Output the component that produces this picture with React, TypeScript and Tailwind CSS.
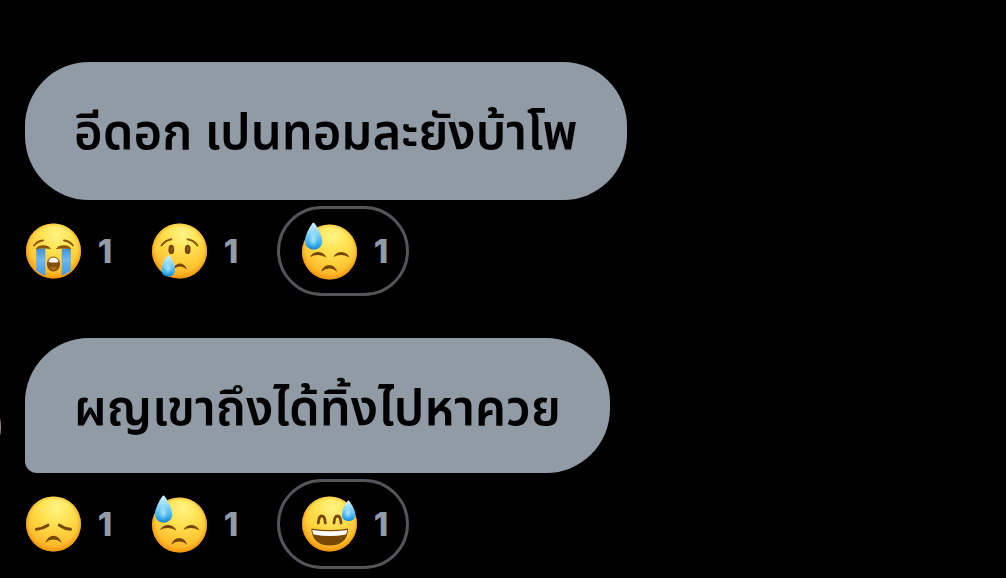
import { useId, useState } from "react";
import type { ReactNode } from "react";

type EmojiName = "sob" | "cry" | "sweat" | "disappointed" | "sweatSmile";

interface Reaction {
  emoji: EmojiName;
  count: number;
}

interface Message {
  id: number;
  text: string;
  last: boolean;
  reactions: Reaction[];
  selected: EmojiName;
}

const MESSAGES: Message[] = [
  {
    id: 1,
    text: "อีดอก เปนทอมละยังบ้าโพ",
    last: false,
    reactions: [
      { emoji: "sob", count: 1 },
      { emoji: "cry", count: 1 },
      { emoji: "sweat", count: 1 },
    ],
    selected: "sweat",
  },
  {
    id: 2,
    text: "ผญเขาถึงได้ทิ้งไปหาควย",
    last: true,
    reactions: [
      { emoji: "disappointed", count: 1 },
      { emoji: "sweat", count: 1 },
      { emoji: "sweatSmile", count: 1 },
    ],
    selected: "sweatSmile",
  },
];

const LABELS: Record<EmojiName, string> = {
  sob: "Loudly crying",
  cry: "Crying",
  sweat: "Downcast with sweat",
  disappointed: "Disappointed",
  sweatSmile: "Grinning with sweat",
};

const BROWN = "#744708";

function Face({ cy = 32, children }: { cy?: number; children: (id: string) => ReactNode }) {
  const id = useId();
  return (
    <svg width="58" height="64" viewBox="0 0 58 64" fill="none" aria-hidden="true" className="shrink-0">
      <defs>
        <radialGradient id={`${id}face`} cx="0.56" cy="0.2" r="0.82">
          <stop offset="0" stopColor="#fff485" />
          <stop offset="0.35" stopColor="#ffe252" />
          <stop offset="0.7" stopColor="#ffc836" />
          <stop offset="1" stopColor="#fba81e" />
        </radialGradient>
        <radialGradient id={`${id}edge`} cx="0.5" cy="0.48" r="0.53">
          <stop offset="0.8" stopColor="#f08c00" stopOpacity="0" />
          <stop offset="1" stopColor="#e88400" stopOpacity="0.65" />
        </radialGradient>
        <linearGradient id={`${id}drop`} x1="0" y1="0" x2="0" y2="1">
          <stop offset="0" stopColor="#d6f4ff" />
          <stop offset="0.4" stopColor="#86d6fa" />
          <stop offset="0.75" stopColor="#3fb2f0" />
          <stop offset="1" stopColor="#1388d4" />
        </linearGradient>
        <radialGradient id={`${id}shine`} cx="0.5" cy="0.5" r="0.5">
          <stop offset="0" stopColor="#d8f7ff" stopOpacity="0.7" />
          <stop offset="1" stopColor="#a5e6ff" stopOpacity="0" />
        </radialGradient>
        <linearGradient id={`${id}tear`} x1="0" y1="0" x2="0" y2="1">
          <stop offset="0" stopColor="#3f8fd6" />
          <stop offset="0.4" stopColor="#6bb9f3" />
          <stop offset="1" stopColor="#4298e2" />
        </linearGradient>
      </defs>
      <circle cx="28.5" cy={cy} r="27.5" fill={`url(#${id}face)`} />
      <circle cx="28.5" cy={cy} r="27.5" fill={`url(#${id}edge)`} />
      {children(id)}
    </svg>
  );
}

function Sob() {
  return (
    <Face>
      {(id) => (
        <>
          <path d="M9 26.5Q12.5 22 18 21.5M39 21.5Q44.5 22 48 26.5" stroke="#8a5508" strokeWidth="1.8" strokeLinecap="round" />
          <path d="M11.2 29.5H20.3V56.8Q15.5 54.8 11.2 51.5Z" fill={`url(#${id}tear)`} />
          <path d="M36.7 29.5H45.8V51.5Q41.5 54.8 36.7 56.8Z" fill={`url(#${id}tear)`} />
          <path d="M10.6 30.3Q12.5 26.3 18 26.2Q24.5 26.4 26 30.3Q22 29.3 18.5 29.6Q14 29.4 10.6 30.3ZM31 30.3Q32.5 26.4 39 26.2Q44.5 26.3 46.4 30.3Q42 29.4 38.5 29.6Q35 29.3 31 30.3Z" fill="#8a5508" />
          <ellipse cx="28.5" cy="45" rx="6.6" ry="7.4" fill="#80500c" />
          <path d="M23.5 43Q24 38.5 28.5 38.4Q33 38.5 33.5 43Q28.5 44.2 23.5 43Z" fill="#fff" />
          <path d="M24.5 49Q28.5 46.2 32.5 49Q28.5 53.2 24.5 49Z" fill="#a96b18" />
        </>
      )}
    </Face>
  );
}

function Cry() {
  return (
    <Face>
      {(id) => (
        <>
          <path d="M10.5 26.5Q14 21.5 20.3 20.2M36.7 20.2Q43 21.5 46.5 26.5" stroke="#8a5508" strokeWidth="2" strokeLinecap="round" />
          <ellipse cx="20.3" cy="30.4" rx="2.9" ry="4.7" fill={BROWN} />
          <ellipse cx="36.7" cy="30.4" rx="2.9" ry="4.7" fill={BROWN} />
          <path d="M20.8 28.5V31.5M36.9 28.5V31.5" stroke="#99651b" strokeWidth="1.2" strokeLinecap="round" />
          <path d="M23 48Q25.5 44.2 29.5 44.4Q34.5 45.2 36 50.5Q33 47.7 29.5 47.4Q26 47.3 23.5 49.5Z" fill={BROWN} />
          <path d="M17.6 36C18.8 36 24 44.5 24 50.8C24 55 21.2 57.6 17.3 57.6C13.3 57.6 10.4 55 10.4 50.8C10.4 44.5 16.4 36 17.6 36Z" fill={`url(#${id}drop)`} />
          <ellipse cx="17" cy="49" rx="4.5" ry="7" fill={`url(#${id}shine)`} />
        </>
      )}
    </Face>
  );
}

function Sweat() {
  return (
    <Face cy={33}>
      {(id) => (
        <>
          <path d="M9 38Q11.5 33.1 17.5 33Q23.5 33.6 25.2 38.5Q21.5 36.2 17 36Q12.5 35.9 9 38Z" fill={BROWN} />
          <path d="M32.4 38Q35 33.1 40.5 33Q46.5 33.6 48.4 38.5Q44.5 36.2 40.5 36Q36 35.9 32.4 38Z" fill={BROWN} />
          <path d="M20.1 52.8Q22.5 46.1 28.2 46Q34 46.1 36.2 52.8Q32.5 49.6 28.2 49.5Q24 49.6 20.1 52.8Z" fill={BROWN} />
          <path d="M12.5 3.5C13.8 3.5 21.2 15 21.2 22.2C21.2 27.4 17.5 30.5 12.7 30.5C7.8 30.5 4 27.4 4 22.2C4 15 11.2 3.5 12.5 3.5Z" fill={`url(#${id}drop)`} />
          <ellipse cx="12.3" cy="20.5" rx="5" ry="9" fill={`url(#${id}shine)`} />
        </>
      )}
    </Face>
  );
}

function Disappointed() {
  return (
    <Face>
      {() => (
        <>
          <path d="M11.5 37.3Q17.5 36.8 23 33.2" stroke={BROWN} strokeWidth="3" strokeLinecap="round" />
          <path d="M34.3 33.2Q39.5 36.8 45.5 37.3" stroke={BROWN} strokeWidth="3" strokeLinecap="round" />
          <path d="M20.3 50.8Q23 43.9 28.5 43.7Q34 43.9 36.7 50.8Q33 47.6 28.5 47.6Q24 47.6 20.3 50.8Z" fill={BROWN} />
        </>
      )}
    </Face>
  );
}

function SweatSmile() {
  return (
    <Face>
      {(id) => (
        <>
          <path d="M17.3 31Q17.8 24 20.8 24Q23.9 24 24.3 31M33 31Q33.5 24 36.5 24Q39.5 24 40 31" stroke={BROWN} strokeWidth="2.8" strokeLinecap="round" />
          <path d="M10.3 36.5Q28.5 39.5 47.2 36.5Q46.5 53.3 28.7 53.6Q11.3 53.3 10.3 36.5Z" fill="#7a4704" />
          <path d="M11.3 38Q28.5 40.7 46.2 38Q46 41.5 44.7 42.5Q28.7 45.7 13 42.5Q11.5 41.5 11.3 38Z" fill="#fff" />
          <path d="M47.3 8.5C48.5 8.5 54.4 17.5 54.4 23C54.4 26.7 51.5 29 47.6 29C43.7 29 40.8 26.7 40.8 23C40.8 17.5 46.2 8.5 47.3 8.5Z" fill={`url(#${id}drop)`} />
          <ellipse cx="47" cy="21" rx="4" ry="7" fill={`url(#${id}shine)`} />
        </>
      )}
    </Face>
  );
}

const EMOJIS: Record<EmojiName, () => ReactNode> = {
  sob: Sob,
  cry: Cry,
  sweat: Sweat,
  disappointed: Disappointed,
  sweatSmile: SweatSmile,
};

function ReactionButton({
  reaction,
  selected,
  onClick,
}: {
  reaction: Reaction;
  selected: boolean;
  onClick: () => void;
}) {
  const Emoji = EMOJIS[reaction.emoji];
  return (
    <button
      onClick={onClick}
      aria-label={`${LABELS[reaction.emoji]} ${reaction.count}`}
      aria-pressed={selected}
      className={
        selected
          ? "flex h-[90px] items-center gap-[13px] rounded-full border-3 border-[#545558] pr-4 pl-[21px]"
          : "flex h-[90px] items-center gap-[13px]"
      }
    >
      <Emoji />
      <span className="min-w-[18px] text-center text-[33px] leading-10 font-extrabold text-[#939ba6]">
        {reaction.count}
      </span>
    </button>
  );
}

function MessageGroup({ message }: { message: Message }) {
  const [selected, setSelected] = useState<EmojiName>(message.selected);
  return (
    <article className="flex flex-col items-start gap-1.5">
      <p
        className={
          message.last
            ? "rounded-[64px] rounded-bl-xl bg-[#919ba5] px-[49px] pt-9 pb-[31px] text-[49px] leading-[68px] font-semibold text-black"
            : "rounded-[64px] bg-[#919ba5] px-[49px] pt-9 pb-[34px] text-[49px] leading-[68px] font-semibold text-black"
        }
      >
        {message.text}
      </p>
      <div className="flex gap-[37px]">
        {message.reactions.map((r) => (
          <ReactionButton
            key={r.emoji}
            reaction={r}
            selected={r.emoji === selected}
            onClick={() => setSelected(r.emoji)}
          />
        ))}
      </div>
    </article>
  );
}

export default function App() {
  return (
    <main
      lang="th"
      className="flex min-h-screen overflow-hidden bg-black pt-[62px] font-[Inter,'Noto_Sans_Thai','Noto_Sans',sans-serif]"
    >
      {/* Sender avatar, mostly off the left edge */}
      <div className="mt-[325px] mr-6 -ml-[79px] size-20 shrink-0 rounded-full bg-[#a58a86]" />
      <div className="flex min-w-0 flex-1 flex-col gap-[42px]">
        {MESSAGES.map((m) => (
          <MessageGroup key={m.id} message={m} />
        ))}
      </div>
    </main>
  );
}
